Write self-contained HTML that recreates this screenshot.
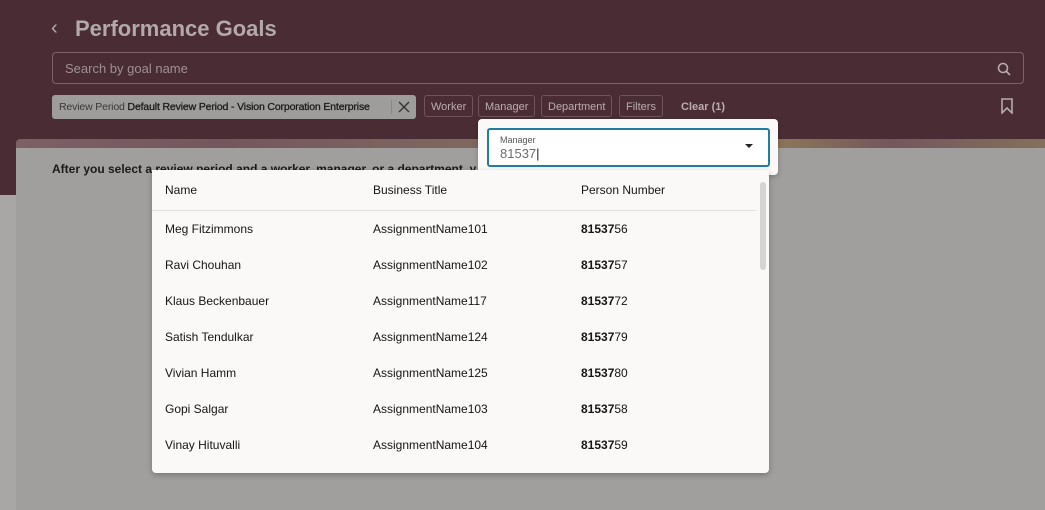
<!DOCTYPE html>
<html><head><style>
body{margin:0;width:1045px;height:510px;overflow:hidden;background:#4a2d34;font-family:"Liberation Sans",sans-serif;position:relative}
.abs{position:absolute}
.chip{position:absolute;top:95px;height:22px;border:1px solid #6e555b;border-radius:3px;color:#b9aeb0;font-size:11px;line-height:22px;padding:0 6px;box-sizing:border-box}
table{border-collapse:collapse;font-size:12px;color:#161513}
td{height:36px;padding:0}
</style></head><body>
<div class="abs" style="left:0;top:195px;width:16px;height:315px;background:#a8a7a5"></div>
<div class="abs" style="left:16px;top:139px;width:1029px;height:10px;background:linear-gradient(90deg,#7d6066 0,#74565d 20%,#806860 45%,#74565d 60%,#8a7458 75%,#74565d 85%,#84705a 100%);border-radius:4px 0 0 0"></div>
<div class="abs" style="left:16px;top:148px;width:1029px;height:362px;background:#a09f9d"></div>
<div class="abs" style="left:51px;top:17px;color:#b5abad;font-size:20px">&#8249;</div>
<div class="abs" style="left:75px;top:16px;color:#b3a9ab;font-size:22px;font-weight:bold">Performance Goals</div>
<div class="abs" style="left:52px;top:52px;width:972px;height:32px;border:1px solid #7a6268;border-radius:4px;box-sizing:border-box;color:#9d9193;font-size:13px;line-height:32px;padding-left:12px">Search by goal name
<svg style="position:absolute;right:12px;top:9px" width="14" height="14" viewBox="0 0 14 14"><circle cx="6" cy="6" r="4.5" fill="none" stroke="#b5abad" stroke-width="1.6"/><path d="M9.5 9.5L13 13" stroke="#b5abad" stroke-width="1.6"/></svg></div>
<div class="abs" style="left:52px;top:95px;width:364px;height:24px;background:#9e9d9b;border-radius:3px;font-size:10.5px;letter-spacing:-0.15px;line-height:24px;color:#3a3735;padding-left:7px;box-sizing:border-box;white-space:nowrap">Review Period <b style="color:#1b1a19;font-weight:normal;-webkit-text-stroke:.3px #1b1a19">Default Review Period - Vision Corporation Enterprise</b>
<span style="position:absolute;left:339px;top:5px;width:1px;height:14px;background:#888"></span>
<svg style="position:absolute;left:346px;top:6px" width="12" height="12"><path d="M1 1L11 11M11 1L1 11" stroke="#333" stroke-width="1.4"/></svg></div>
<div class="chip" style="left:424px">Worker</div>
<div class="chip" style="left:478px">Manager</div>
<div class="chip" style="left:541px">Department</div>
<div class="chip" style="left:619px">Filters</div>
<div class="abs" style="left:681px;top:101px;color:#b9aeb0;font-size:11px;font-weight:bold">Clear (1)</div>
<svg class="abs" style="left:1000px;top:98px" width="14" height="16"><path d="M2 1H12V15L7 10L2 15Z" fill="none" stroke="#b5abad" stroke-width="1.6"/></svg>
<div class="abs" style="left:52px;top:162px;font-size:12px;font-weight:bold;color:#1b1a19">After you select a review period and a worker, manager, or a department, y</div>
<div class="abs" style="left:478px;top:119px;width:300px;height:56px;background:#fbf9f8;border-radius:4px;box-shadow:0 2px 6px rgba(0,0,0,.2)"></div>
<div class="abs" style="left:487px;top:128px;width:283px;height:39px;border:2px solid #227e9e;border-radius:3px;box-sizing:border-box;background:#fff">
<div class="abs" style="left:11px;top:5px;font-size:9px;color:#555">Manager</div>
<div class="abs" style="left:11px;top:16px;font-size:13px;color:#6f6c6a">81537<span style="color:#222">|</span></div>
<div class="abs" style="left:256px;top:14px;width:0;height:0;border-left:4px solid transparent;border-right:4px solid transparent;border-top:4px solid #222"></div>
</div>
<div class="abs" style="left:152px;top:170px;width:617px;height:303px;background:#fbf9f8;border-radius:0 0 4px 4px;box-shadow:0 2px 6px rgba(0,0,0,.25);overflow:hidden">
<div class="abs" style="left:0;top:40px;width:604px;height:1px;background:#e2e0de"></div>
<div class="abs" style="left:608px;top:12px;width:6px;height:88px;background:#d6d4d2;border-radius:3px"></div>
<div class="abs" style="left:13px;top:13px;font-size:12px;color:#161513">Name</div>
<div class="abs" style="left:221px;top:13px;font-size:12px;color:#161513">Business Title</div>
<div class="abs" style="left:429px;top:13px;font-size:12px;color:#161513">Person Number</div>
<table class="abs" style="left:13px;top:41px">
<tr><td style="width:208px">Meg Fitzimmons</td><td style="width:208px">AssignmentName101</td><td><b>81537</b>56</td></tr>
<tr><td>Ravi Chouhan</td><td>AssignmentName102</td><td><b>81537</b>57</td></tr>
<tr><td>Klaus Beckenbauer</td><td>AssignmentName117</td><td><b>81537</b>72</td></tr>
<tr><td>Satish Tendulkar</td><td>AssignmentName124</td><td><b>81537</b>79</td></tr>
<tr><td>Vivian Hamm</td><td>AssignmentName125</td><td><b>81537</b>80</td></tr>
<tr><td>Gopi Salgar</td><td>AssignmentName103</td><td><b>81537</b>58</td></tr>
<tr><td>Vinay Hituvalli</td><td>AssignmentName104</td><td><b>81537</b>59</td></tr>
</table>
</div>
</body></html>
